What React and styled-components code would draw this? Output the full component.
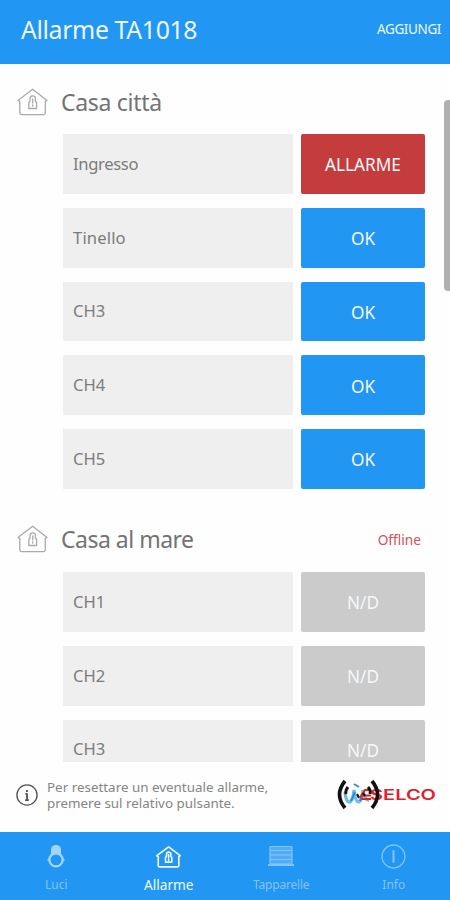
import React from "react";
import styled, { createGlobalStyle } from "styled-components";

const GlobalStyle = createGlobalStyle`
  body {
    margin: 0;
    background: #fff;
    font-family: "Noto Sans", "Open Sans", sans-serif;
  }
`;

const Screen = styled.div`
  display: flex;
  flex-direction: column;
  position: relative;
  width: 450px;
  height: 900px;
  overflow: hidden;
  background: #fefefe;
`;

const Header = styled.header`
  display: flex;
  flex: none;
  align-items: center;
  justify-content: space-between;
  box-sizing: border-box;
  height: 64px;
  padding: 0 9px 6px 21px;
  background: #2196f3;
  color: #eef8ff;
`;

const Text = styled.span`
  font-size: ${(p) => p.$size}px;
  letter-spacing: ${(p) => p.$spacing || 0}px;
  white-space: nowrap;
`;

const Content = styled.main`
  flex: 1;
  min-height: 0;
  overflow: hidden;
`;

const Section = styled.section`
  padding: 0 25px 0 17px;
  margin-bottom: 13px;
`;

const SectionHead = styled.div`
  display: flex;
  align-items: center;
  box-sizing: border-box;
  height: 70px;
  padding-top: 5px;
  color: #737373;

  svg {
    margin-right: 13px;
  }
`;

const Offline = styled(Text)`
  margin: 0 4px 0 auto;
  color: #d0505a;
`;

const Rows = styled.div`
  display: flex;
  flex-direction: column;
  gap: 14px;
  padding-left: 46px;
`;

const Row = styled.div`
  display: grid;
  grid-template-columns: 230px 1fr;
  gap: 8px;
  height: 59.8px;
`;

const Label = styled.div`
  display: flex;
  align-items: center;
  padding: 0 0 1px 10px;
  background: #efefef;
  color: #7c7c7c;
`;

const colors = { ALLARME: "#c43c3c", OK: "#2196f3", "N/D": "#cbcbcb" };

const StateButton = styled.button`
  border: 0;
  border-radius: 2px;
  padding: 1.5px 0 0;
  background: ${(p) => colors[p.$state]};
  color: #f4f8fa;
  font-family: inherit;
`;

const ScrollThumb = styled.div`
  position: absolute;
  top: 100px;
  right: -4px;
  width: 10px;
  height: 191px;
  border-radius: 4px;
  background: #b0b0b0;
`;

const Hint = styled.div`
  display: flex;
  flex: none;
  align-items: center;
  box-sizing: border-box;
  height: 70px;
  padding: 0 13px 4px 16px;
  color: #858585;
`;

const HintText = styled.p`
  flex: 1;
  margin: 0 0 0 9px;
  font-size: 13.4px;
  line-height: 16.5px;
  white-space: nowrap;
`;

const TabBar = styled.nav`
  display: grid;
  flex: none;
  grid-template-columns: repeat(4, 1fr);
  height: 68px;
  background: #2196f3;
`;

const Tab = styled.div`
  display: grid;
  grid-template-rows: 25px 20px;
  row-gap: 6px;
  justify-items: center;
  align-content: start;
  align-items: center;
  padding-top: 12px;
  color: ${(p) => (p.$active ? "#f2faff" : "#83c4f8")};

  span {
    line-height: 20px;
  }
`;

function HouseIcon({ width = 31, height = 28, stroke = "#aaa", thick = 1.3 }) {
  return (
    <svg width={width} height={height} viewBox="0 0 31 28" preserveAspectRatio="none" fill="none" stroke={stroke} strokeWidth={thick} strokeLinejoin="round" strokeLinecap="round">
      <path d="M1 12.4 15.7 1.2 30 12.4 28.3 13.4V25a1.6 1.6 0 0 1-1.6 1.6H4.4A1.6 1.6 0 0 1 2.8 25V13.4Z" />
      <path d="M11.8 14.500v6h7.800v-6l-1.200-1.500v-2.500a2.700 2.700 0 0 0-5.400 0V13ZM15.700 11v4M15.700 17v1" />
    </svg>
  );
}

function InfoIcon({ size, stroke, thick = 1.5, plain }) {
  return (
    <svg width={size} height={size} viewBox="0 0 24 24" fill="none" stroke={stroke} strokeWidth={thick}>
      <circle cx="12" cy="12" r="11" />
      {plain ? (
        <path d="M12 6v12" strokeWidth="2" />
      ) : (
        <path d="M12 6.500v2.300M12 10.200V18M10.300 10.800H12M10 17.600h4" strokeWidth="2" />
      )}
    </svg>
  );
}

function BulbIcon() {
  return (
    <svg width="18" height="23" viewBox="0 0 18 23" fill="none" stroke="#a5d5fb" strokeWidth="2.200">
      <circle cx="9" cy="14.8" r="6.600" />
      <path d="M4 9V4.500a5 4.500 0 0 1 10 0V9L12 9.500H6Z" fill="#a5d5fb" stroke="none" />
      <path d="M.5 14.800h2M15.500 14.800h2" strokeWidth="1.400" />
    </svg>
  );
}

function ShutterIcon() {
  return (
    <svg width="28" height="23" viewBox="0 0 28 23" fill="none" stroke="#83c4f8" strokeWidth="1.200">
      <rect x="3" y="1.500" width="22" height="17.500" rx="1" fill="#4facf6" />
      <path d="M3 5.500h22M3 10h22M3 14.500h22" />
      <path d="M1 20h26" strokeWidth="2" />
    </svg>
  );
}

function Logo() {
  return (
    <svg width="100" height="36" viewBox="0 0 100 36" fill="none">
      <path d="M8 15q1 11 5 10 3-2 4-12 1 12 5 12 3-2 4-12 2 11 6 10" stroke="#6fbde8" strokeWidth="3.200" />
      <path d="M17 7l5 3M14 24l4-9M23 24l4-9" stroke="#2a8fd0" strokeWidth="2" />
      <path d="M23 20.500 28 13h6M25 18.500h9M24 22h10" stroke="#dc2329" strokeWidth="2" />
      <text x="33" y="22.500" textLength="66" lengthAdjust="spacingAndGlyphs" fill="#dc2329" fontFamily="Inter, sans-serif" fontWeight="600" fontSize="14.5">
        SELCO
      </text>
      <g stroke="#111" strokeWidth="3.600">
        <path d="M8 4Q-3 17.500 8 31" />
        <path d="M35 4Q46 17.500 35 31" />
        <path d="M11 10Q8 14 9 17M31 10Q34 13 33 17" strokeWidth="3" />
        <path d="M20 17l2 4M26 16l2 3" strokeWidth="2" />
      </g>
    </svg>
  );
}

const houses = [
  {
    name: "Casa città",
    spacing: -0.3,
    channels: [
      { name: "Ingresso", state: "ALLARME", spacing: -0.35 },
      { name: "Tinello", state: "OK", spacing: 0.15 },
      { name: "CH3", state: "OK" },
      { name: "CH4", state: "OK" },
      { name: "CH5", state: "OK" },
    ],
  },
  {
    name: "Casa al mare",
    spacing: -0.5,
    offline: true,
    channels: [
      { name: "CH1", state: "N/D" },
      { name: "CH2", state: "N/D" },
      { name: "CH3", state: "N/D" },
    ],
  },
];

export default function App() {
  return (
    <Screen>
      <GlobalStyle />
      <Header>
        <Text $size={24.8} $spacing={-0.35}>Allarme TA1018</Text>
        <Text $size={13.5} $spacing={-0.4}>AGGIUNGI</Text>
      </Header>
      <Content>
        {houses.map((house) => (
          <Section key={house.name}>
            <SectionHead>
              <HouseIcon />
              <Text $size={23} $spacing={house.spacing}>{house.name}</Text>
              {house.offline && <Offline $size={13.7}>Offline</Offline>}
            </SectionHead>
            <Rows>
              {house.channels.map((channel) => (
                <Row key={channel.name}>
                  <Label>
                    <Text $size={16.6} $spacing={channel.spacing}>{channel.name}</Text>
                  </Label>
                  <StateButton $state={channel.state}>
                    <Text $size={17.2}>{channel.state}</Text>
                  </StateButton>
                </Row>
              ))}
            </Rows>
          </Section>
        ))}
      </Content>
      <ScrollThumb />
      <Hint>
        <InfoIcon size={22} stroke="#555" />
        <HintText>
          Per resettare un eventuale allarme,
          <br />
          premere sul relativo pulsante.
        </HintText>
        <Logo />
      </Hint>
      <TabBar>
        <Tab>
          <BulbIcon />
          <Text $size={12}>Luci</Text>
        </Tab>
        <Tab $active>
          <HouseIcon width={25} height={22} stroke="#f2faff" thick={2} />
          <Text $size={13.7}>Allarme</Text>
        </Tab>
        <Tab>
          <ShutterIcon />
          <Text $size={12} $spacing={-0.2}>Tapparelle</Text>
        </Tab>
        <Tab>
          <InfoIcon size={25} stroke="#83c4f8" thick={1.3} plain />
          <Text $size={12}>Info</Text>
        </Tab>
      </TabBar>
    </Screen>
  );
}
